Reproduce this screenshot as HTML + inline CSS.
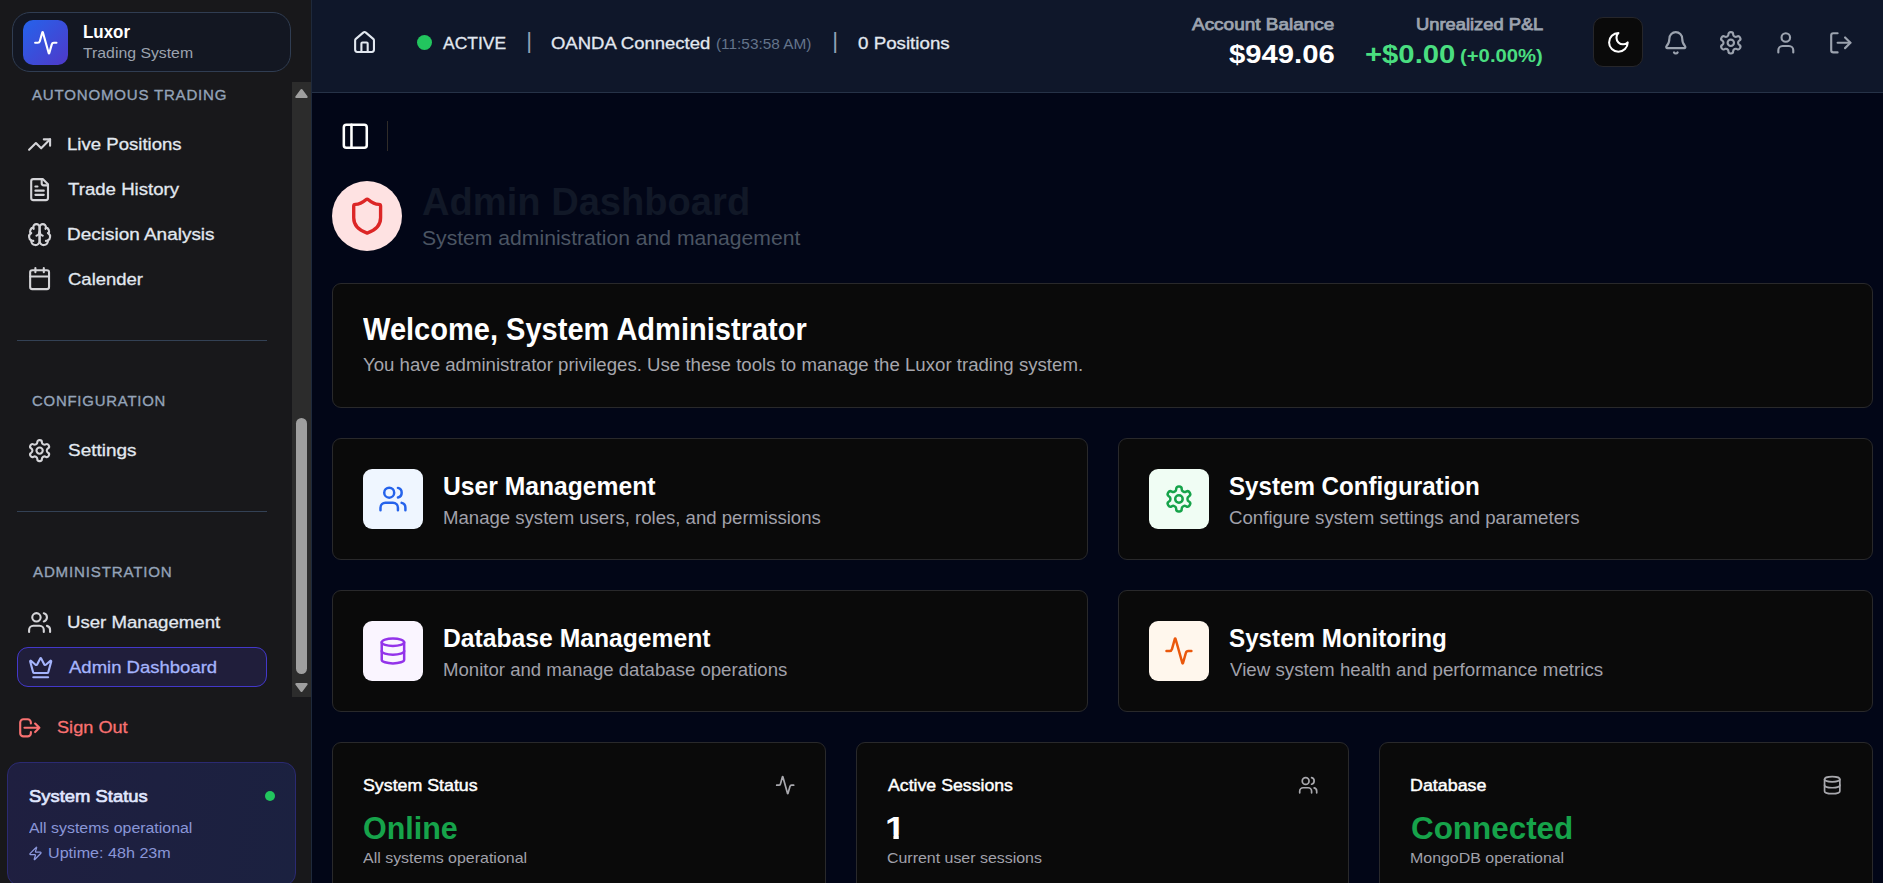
<!DOCTYPE html>
<html lang="en"><head><meta charset="utf-8"><title>Luxor Trading System - Admin Dashboard</title><style>
*{box-sizing:border-box;margin:0;padding:0}
html,body{width:1883px;height:883px;overflow:hidden;background:#020617;font-family:"Liberation Sans",Arial,sans-serif;}
#app{position:relative;width:1883px;height:883px;overflow:hidden;background:#020617}
.abs,.t,.ic{position:absolute}
.t{white-space:nowrap;display:block;transform-origin:0 50%}
.ic{display:block;overflow:visible}
#sb{position:absolute;left:0;top:0;width:312px;height:883px;background:#18181b;border-right:1px solid #1e293b}
#tb{position:absolute;left:312px;top:0;width:1571px;height:93px;background:#0f172a;border-bottom:1px solid #263247}
.card{position:absolute;background:#0a0a0a;border:1px solid #29292b;border-radius:9px}
.ib{position:absolute;width:60px;height:60px;border-radius:9px}
.sep{position:absolute;left:17px;width:250px;height:1px;background:#334155}
</style></head><body><div id="app">
<aside id="sb">
  <div class="abs" style="left:12px;top:12px;width:279px;height:60px;border-radius:18px;background:#131722;border:1px solid #303d52"></div>
  <div class="abs" style="left:23px;top:20px;width:45px;height:45px;border-radius:10px;background:linear-gradient(135deg,#2563eb,#4f39c9)"></div>
  <svg class="ic" style="left:32.70px;top:29.70px;width:25.60px;height:25.60px;color:#ffffff;" viewBox="0 0 24 24" fill="none" stroke="currentColor" stroke-width="2" stroke-linecap="round" stroke-linejoin="round"><path d="M22 12h-2.48a2 2 0 0 0-1.93 1.46l-2.35 8.36a.25.25 0 0 1-.48 0L9.24 2.18a.25.25 0 0 0-.48 0l-2.35 8.36A2 2 0 0 1 4.49 12H2"/></svg>
  <span class="t" id="lux" style="left:83.06px;top:18.50px;font-size:18.4px;line-height:26px;font-weight:700;color:#ffffff;transform:scaleX(0.9199);">Luxor</span><span class="t" id="luxs" style="left:83.38px;top:41.90px;font-size:15px;line-height:21px;font-weight:400;color:#9ca3af;transform:scaleX(1.0535);">Trading System</span><span class="t" id="l1" style="left:32.11px;top:83.70px;font-size:15px;line-height:21px;font-weight:400;color:#94a3b8;transform:scaleX(1.0029);-webkit-text-stroke:0.35px #94a3b8;letter-spacing:0.8px;">AUTONOMOUS TRADING</span>
  <svg class="ic" style="left:27.00px;top:132.00px;width:25.20px;height:25.20px;color:#d4d4d8;" viewBox="0 0 24 24" fill="none" stroke="currentColor" stroke-width="2" stroke-linecap="round" stroke-linejoin="round"><polyline points="22 7 13.5 15.5 8.5 10.5 2 17"/><polyline points="16 7 22 7 22 13"/></svg><span class="t" id="n1" style="left:67.23px;top:132.10px;font-size:17.2px;line-height:24px;font-weight:400;color:#e2e8f0;transform:scaleX(1.0813);-webkit-text-stroke:0.3px #e2e8f0;">Live Positions</span>
  <svg class="ic" style="left:27.00px;top:176.80px;width:25.20px;height:25.20px;color:#d4d4d8;" viewBox="0 0 24 24" fill="none" stroke="currentColor" stroke-width="2" stroke-linecap="round" stroke-linejoin="round"><path d="M15 2H6a2 2 0 0 0-2 2v16a2 2 0 0 0 2 2h12a2 2 0 0 0 2-2V7Z"/><path d="M14 2v4a2 2 0 0 0 2 2h4"/><path d="M10 9H8"/><path d="M16 13H8"/><path d="M16 17H8"/></svg><span class="t" id="n2" style="left:68.31px;top:177.30px;font-size:17.2px;line-height:24px;font-weight:400;color:#e2e8f0;transform:scaleX(1.0834);-webkit-text-stroke:0.3px #e2e8f0;">Trade History</span>
  <svg class="ic" style="left:27.00px;top:221.60px;width:25.20px;height:25.20px;color:#d4d4d8;" viewBox="0 0 24 24" fill="none" stroke="currentColor" stroke-width="2" stroke-linecap="round" stroke-linejoin="round"><path d="M12 5a3 3 0 1 0-5.997.125 4 4 0 0 0-2.526 5.77 4 4 0 0 0 .556 6.588A4 4 0 1 0 12 18Z"/><path d="M12 5a3 3 0 1 1 5.997.125 4 4 0 0 1 2.526 5.77 4 4 0 0 1-.556 6.588A4 4 0 1 1 12 18Z"/><path d="M15 13a4.5 4.5 0 0 1-3-4 4.5 4.5 0 0 1-3 4"/><path d="M17.599 6.5a3 3 0 0 0 .399-1.375"/><path d="M6.003 5.125A3 3 0 0 0 6.401 6.5"/><path d="M3.477 10.896a4 4 0 0 1 .585-.396"/><path d="M19.938 10.5a4 4 0 0 1 .585.396"/><path d="M6 18a4 4 0 0 1-1.967-.516"/><path d="M19.967 17.484A4 4 0 0 1 18 18"/></svg><span class="t" id="n3" style="left:67.21px;top:222.10px;font-size:17.2px;line-height:24px;font-weight:400;color:#e2e8f0;transform:scaleX(1.1034);-webkit-text-stroke:0.3px #e2e8f0;">Decision Analysis</span>
  <svg class="ic" style="left:27.00px;top:266.40px;width:25.20px;height:25.20px;color:#d4d4d8;" viewBox="0 0 24 24" fill="none" stroke="currentColor" stroke-width="2" stroke-linecap="round" stroke-linejoin="round"><path d="M8 2v4"/><path d="M16 2v4"/><rect width="18" height="18" x="3" y="4" rx="2"/><path d="M3 10h18"/></svg><span class="t" id="n4" style="left:67.56px;top:267.00px;font-size:17.2px;line-height:24px;font-weight:400;color:#e2e8f0;transform:scaleX(1.0755);-webkit-text-stroke:0.3px #e2e8f0;">Calender</span>
  <div class="sep" style="top:340px"></div>
  <span class="t" id="l2" style="left:31.81px;top:389.70px;font-size:15px;line-height:21px;font-weight:400;color:#94a3b8;transform:scaleX(0.9927);-webkit-text-stroke:0.35px #94a3b8;letter-spacing:0.8px;">CONFIGURATION</span>
  <svg class="ic" style="left:27.00px;top:437.90px;width:25.20px;height:25.20px;color:#d4d4d8;" viewBox="0 0 24 24" fill="none" stroke="currentColor" stroke-width="2" stroke-linecap="round" stroke-linejoin="round"><path d="M12.22 2h-.44a2 2 0 0 0-2 2v.18a2 2 0 0 1-1 1.73l-.43.25a2 2 0 0 1-2 0l-.15-.08a2 2 0 0 0-2.73.73l-.22.38a2 2 0 0 0 .73 2.73l.15.1a2 2 0 0 1 1 1.72v.51a2 2 0 0 1-1 1.74l-.15.09a2 2 0 0 0-.73 2.73l.22.38a2 2 0 0 0 2.73.73l.15-.08a2 2 0 0 1 2 0l.43.25a2 2 0 0 1 1 1.73V20a2 2 0 0 0 2 2h.44a2 2 0 0 0 2-2v-.18a2 2 0 0 1 1-1.73l.43-.25a2 2 0 0 1 2 0l.15.08a2 2 0 0 0 2.73-.73l.22-.39a2 2 0 0 0-.73-2.73l-.15-.08a2 2 0 0 1-1-1.74v-.5a2 2 0 0 1 1-1.74l.15-.09a2 2 0 0 0 .73-2.73l-.22-.38a2 2 0 0 0-2.73-.73l-.15.08a2 2 0 0 1-2 0l-.43-.25a2 2 0 0 1-1-1.73V4a2 2 0 0 0-2-2z"/><circle cx="12" cy="12" r="3"/></svg><span class="t" id="n5" style="left:67.56px;top:438.10px;font-size:17.2px;line-height:24px;font-weight:400;color:#e2e8f0;transform:scaleX(1.1016);-webkit-text-stroke:0.3px #e2e8f0;">Settings</span>
  <div class="sep" style="top:511px"></div>
  <span class="t" id="l3" style="left:32.51px;top:560.70px;font-size:15px;line-height:21px;font-weight:400;color:#94a3b8;transform:scaleX(1.0083);-webkit-text-stroke:0.35px #94a3b8;letter-spacing:0.8px;">ADMINISTRATION</span>
  <svg class="ic" style="left:27.00px;top:609.90px;width:25.20px;height:25.20px;color:#d4d4d8;" viewBox="0 0 24 24" fill="none" stroke="currentColor" stroke-width="2" stroke-linecap="round" stroke-linejoin="round"><path d="M16 21v-2a4 4 0 0 0-4-4H6a4 4 0 0 0-4 4v2"/><circle cx="9" cy="7" r="4"/><path d="M22 21v-2a4 4 0 0 0-3-3.87"/><path d="M16 3.13a4 4 0 0 1 0 7.75"/></svg><span class="t" id="n6" style="left:67.27px;top:610.10px;font-size:17.2px;line-height:24px;font-weight:400;color:#e2e8f0;transform:scaleX(1.0833);-webkit-text-stroke:0.3px #e2e8f0;">User Management</span>
  <div class="abs" style="left:17px;top:647px;width:250px;height:40px;border-radius:11px;background:#201e3b;border:1px solid #4338ca"></div>
  <svg class="ic" style="left:27.60px;top:654.50px;width:25.40px;height:25.40px;color:#a5b4fc;" viewBox="0 0 24 24" fill="none" stroke="currentColor" stroke-width="2" stroke-linecap="round" stroke-linejoin="round"><path d="M11.562 3.266a.5.5 0 0 1 .876 0L15.39 8.87a1 1 0 0 0 1.516.294L21.183 5.5a.5.5 0 0 1 .798.519l-2.834 10.246a1 1 0 0 1-.956.734H5.81a1 1 0 0 1-.957-.734L2.02 6.02a.5.5 0 0 1 .798-.519l4.276 3.664a1 1 0 0 0 1.516-.294z"/><path d="M5 21h14"/></svg><span class="t" id="n7" style="left:69.30px;top:655.00px;font-size:17.2px;line-height:24px;font-weight:400;color:#a5b4fc;transform:scaleX(1.0770);-webkit-text-stroke:0.3px #a5b4fc;">Admin Dashboard</span>
  <div class="abs" style="left:292px;top:82px;width:19px;height:615px;background:#2c2c2c"></div>
  <div class="abs" style="left:296px;top:418px;width:11px;height:256px;border-radius:6px;background:#9f9f9f"></div>
  <svg class="ic" style="left:294.2px;top:86.7px;width:15px;height:13px" viewBox="0 0 15 13"><path d="M7.5 3.3 L12.5 9.9 L2.5 9.9 Z" fill="#9f9f9f" stroke="#9f9f9f" stroke-width="2.4" stroke-linejoin="round"/></svg>
  <svg class="ic" style="left:294.2px;top:680.8px;width:15px;height:13px" viewBox="0 0 15 13"><path d="M7.5 9.7 L12.5 3.1 L2.5 3.1 Z" fill="#9f9f9f" stroke="#9f9f9f" stroke-width="2.4" stroke-linejoin="round"/></svg>
  <svg class="ic" style="left:16.80px;top:714.60px;width:25.60px;height:25.60px;color:#f87171;" viewBox="0 0 24 24" fill="none" stroke="currentColor" stroke-width="2" stroke-linecap="round" stroke-linejoin="round"><path d="M17 16l4-4m0 0l-4-4m4 4H7m6 4v1a3 3 0 01-3 3H6a3 3 0 01-3-3V7a3 3 0 013-3h4a3 3 0 013 3v1"/></svg><span class="t" id="so" style="left:57.49px;top:715.10px;font-size:17.2px;line-height:24px;font-weight:400;color:#f87171;transform:scaleX(1.0563);-webkit-text-stroke:0.3px #f87171;">Sign Out</span>
  <div class="abs" style="left:7px;top:762px;width:289px;height:124px;border-radius:13px;background:linear-gradient(100deg,#1f1f40,#1b2140);border:1px solid #2b2a72"></div>
  <span class="t" id="ss" style="left:28.75px;top:783.80px;font-size:17.4px;line-height:24px;font-weight:400;color:#e0e7ff;transform:scaleX(1.0589);-webkit-text-stroke:0.65px #e0e7ff;">System Status</span>
  <div class="abs" style="left:264.8px;top:790.9px;width:10.6px;height:10.6px;border-radius:50%;background:#22c55e"></div>
  <span class="t" id="ss1" style="left:29.30px;top:817.10px;font-size:15.2px;line-height:21px;font-weight:400;color:#a5b4fc;transform:scaleX(1.0459);opacity:.8;">All systems operational</span>
  <svg class="ic" style="left:27.95px;top:845.95px;width:14.90px;height:14.90px;color:#8f9be0;" viewBox="0 0 24 24" fill="none" stroke="currentColor" stroke-width="2" stroke-linecap="round" stroke-linejoin="round"><path d="M4 14a1 1 0 0 1-.78-1.63l9.9-10.2a.5.5 0 0 1 .86.46l-1.92 6.02A1 1 0 0 0 13 10h7a1 1 0 0 1 .78 1.63l-9.9 10.2a.5.5 0 0 1-.86-.46l1.92-6.02A1 1 0 0 0 11 14z"/></svg><span class="t" id="ss2" style="left:48.17px;top:842.20px;font-size:15.2px;line-height:21px;font-weight:400;color:#a5b4fc;transform:scaleX(1.0614);opacity:.8;">Uptime: 48h 23m</span>
</aside>
<header><div id="tb"></div>
  <svg class="ic" style="left:352.05px;top:30.25px;width:25.10px;height:25.10px;color:#e2e8f0;" viewBox="0 0 24 24" fill="none" stroke="currentColor" stroke-width="2" stroke-linecap="round" stroke-linejoin="round"><path d="M15 21v-8a1 1 0 0 0-1-1h-4a1 1 0 0 0-1 1v8"/><path d="M3 10a2 2 0 0 1 .709-1.528l7-5.999a2 2 0 0 1 2.582 0l7 5.999A2 2 0 0 1 21 10v9a2 2 0 0 1-2 2H5a2 2 0 0 1-2-2z"/></svg>
  <div class="abs" style="left:416.6px;top:34.8px;width:15.4px;height:15.4px;border-radius:50%;background:#22c55e"></div>
  <span class="t" id="act" style="left:443.09px;top:30.80px;font-size:17.2px;line-height:24px;font-weight:400;color:#e2e8f0;transform:scaleX(1.0161);-webkit-text-stroke:0.3px #e2e8f0;">ACTIVE</span><span class="t" id="p1" style="left:526.30px;top:25.30px;font-size:22.5px;line-height:31px;font-weight:400;color:#94a3b8;">|</span><span class="t" id="oan" style="left:551.11px;top:30.80px;font-size:17.2px;line-height:24px;font-weight:400;color:#e2e8f0;transform:scaleX(1.0752);-webkit-text-stroke:0.3px #e2e8f0;">OANDA Connected</span><span class="t" id="tm" style="left:716.10px;top:33.40px;font-size:15.1px;line-height:21px;font-weight:400;color:#64748b;transform:scaleX(1.0182);">(11:53:58 AM)</span><span class="t" id="p2" style="left:832.30px;top:25.30px;font-size:22.5px;line-height:31px;font-weight:400;color:#94a3b8;">|</span><span class="t" id="pos" style="left:858.43px;top:30.80px;font-size:17.2px;line-height:24px;font-weight:400;color:#e2e8f0;transform:scaleX(1.0908);-webkit-text-stroke:0.3px #e2e8f0;">0 Positions</span><span class="t" id="ab" style="left:1191.61px;top:14.10px;font-size:15.9px;line-height:22px;font-weight:400;color:#9ca3af;transform:scaleX(1.1927);-webkit-text-stroke:0.75px #9ca3af;">Account Balance</span><span class="t" id="abv" style="left:1228.85px;top:35.50px;font-size:25.6px;line-height:36px;font-weight:700;color:#ffffff;transform:scaleX(1.1437);">$949.06</span><span class="t" id="up" style="left:1415.84px;top:14.10px;font-size:15.9px;line-height:22px;font-weight:400;color:#9ca3af;transform:scaleX(1.1530);-webkit-text-stroke:0.75px #9ca3af;">Unrealized P&amp;L</span><span class="t" id="upv" style="left:1364.74px;top:35.50px;font-size:25.6px;line-height:36px;font-weight:700;color:#4ade80;transform:scaleX(1.1432);">+$0.00</span><span class="t" id="upp" style="left:1460.06px;top:42.00px;font-size:19px;line-height:27px;font-weight:700;color:#4ade80;transform:scaleX(1.0675);">(+0.00%)</span>
  <div class="abs" style="left:1593.2px;top:17px;width:49.6px;height:49.6px;border-radius:10px;background:#0a0a0a;border:1px solid #26262a"></div>
  <svg class="ic" style="left:1605.60px;top:29.60px;width:24.80px;height:24.80px;color:#ffffff;" viewBox="0 0 24 24" fill="none" stroke="currentColor" stroke-width="2" stroke-linecap="round" stroke-linejoin="round"><path d="M12 3a6 6 0 0 0 9 9 9 9 0 1 1-9-9Z"/></svg>
  <svg class="ic" style="left:1662.80px;top:29.70px;width:25.60px;height:25.60px;color:#9ca3af;" viewBox="0 0 24 24" fill="none" stroke="currentColor" stroke-width="2" stroke-linecap="round" stroke-linejoin="round"><path d="M10.268 21a2 2 0 0 0 3.464 0"/><path d="M3.262 15.326A1 1 0 0 0 4 17h16a1 1 0 0 0 .74-1.673C19.41 13.956 18 12.499 18 8A6 6 0 0 0 6 8c0 4.499-1.411 5.956-2.738 7.326"/></svg>
  <svg class="ic" style="left:1717.60px;top:29.70px;width:25.60px;height:25.60px;color:#9ca3af;" viewBox="0 0 24 24" fill="none" stroke="currentColor" stroke-width="2" stroke-linecap="round" stroke-linejoin="round"><path d="M12.22 2h-.44a2 2 0 0 0-2 2v.18a2 2 0 0 1-1 1.73l-.43.25a2 2 0 0 1-2 0l-.15-.08a2 2 0 0 0-2.73.73l-.22.38a2 2 0 0 0 .73 2.73l.15.1a2 2 0 0 1 1 1.72v.51a2 2 0 0 1-1 1.74l-.15.09a2 2 0 0 0-.73 2.73l.22.38a2 2 0 0 0 2.73.73l.15-.08a2 2 0 0 1 2 0l.43.25a2 2 0 0 1 1 1.73V20a2 2 0 0 0 2 2h.44a2 2 0 0 0 2-2v-.18a2 2 0 0 1 1-1.73l.43-.25a2 2 0 0 1 2 0l.15.08a2 2 0 0 0 2.73-.73l.22-.39a2 2 0 0 0-.73-2.73l-.15-.08a2 2 0 0 1-1-1.74v-.5a2 2 0 0 1 1-1.74l.15-.09a2 2 0 0 0 .73-2.73l-.22-.38a2 2 0 0 0-2.73-.73l-.15.08a2 2 0 0 1-2 0l-.43-.25a2 2 0 0 1-1-1.73V4a2 2 0 0 0-2-2z"/><circle cx="12" cy="12" r="3"/></svg>
  <svg class="ic" style="left:1772.80px;top:29.70px;width:25.60px;height:25.60px;color:#9ca3af;" viewBox="0 0 24 24" fill="none" stroke="currentColor" stroke-width="2" stroke-linecap="round" stroke-linejoin="round"><path d="M19 21v-2a4 4 0 0 0-4-4H9a4 4 0 0 0-4 4v2"/><circle cx="12" cy="7" r="4"/></svg>
  <svg class="ic" style="left:1827.80px;top:29.70px;width:25.60px;height:25.60px;color:#9ca3af;" viewBox="0 0 24 24" fill="none" stroke="currentColor" stroke-width="2" stroke-linecap="round" stroke-linejoin="round"><path d="M9 21H5a2 2 0 0 1-2-2V5a2 2 0 0 1 2-2h4"/><polyline points="16 17 21 12 16 7"/><line x1="21" x2="9" y1="12" y2="12"/></svg>
</header>
<main>
  <svg class="ic" style="left:339.85px;top:120.75px;width:30.60px;height:30.60px;color:#ffffff;" viewBox="0 0 24 24" fill="none" stroke="currentColor" stroke-width="2" stroke-linecap="round" stroke-linejoin="round"><rect width="18" height="18" x="3" y="3" rx="2"/><path d="M9 3v18"/></svg>
  <div class="abs" style="left:387px;top:121px;width:1px;height:30px;background:#302c29"></div>
  <div class="abs" style="left:331.9px;top:180.8px;width:70.4px;height:70.4px;border-radius:50%;background:#fee2e2"></div>
  <svg class="ic" style="left:347.00px;top:195.65px;width:40.30px;height:40.30px;color:#dc2626;" viewBox="0 0 24 24" fill="none" stroke="currentColor" stroke-width="2" stroke-linecap="round" stroke-linejoin="round"><path d="M20 13c0 5-3.5 7.5-7.66 8.95a1 1 0 0 1-.67-.01C7.5 20.5 4 18 4 13V6a1 1 0 0 1 1-1c2 0 4.5-1.2 6.24-2.72a1.17 1.17 0 0 1 1.52 0C14.51 3.81 17 5 19 5a1 1 0 0 1 1 1z"/></svg>
  <span class="t" id="h1" style="left:421.94px;top:174.50px;font-size:38.4px;line-height:54px;font-weight:700;color:#111827;transform:scaleX(0.9926);">Admin Dashboard</span><span class="t" id="h1s" style="left:422.26px;top:223.80px;font-size:19.7px;line-height:28px;font-weight:400;color:#4b5563;transform:scaleX(1.0737);">System administration and management</span>
  <div class="card" style="left:332px;top:283px;width:1541px;height:124.5px"></div>
  <span class="t" id="wc" style="left:363.32px;top:308.00px;font-size:30.5px;line-height:43px;font-weight:700;color:#ffffff;transform:scaleX(0.9521);">Welcome, System Administrator</span><span class="t" id="wcs" style="left:362.79px;top:352.90px;font-size:17.5px;line-height:24px;font-weight:400;color:#a6a6ad;transform:scaleX(1.0646);">You have administrator privileges. Use these tools to manage the Luxor trading system.</span>
  <div class="card" style="left:332px;top:438px;width:756px;height:122px"></div><div class="ib" style="left:363.1px;top:468.8px;background:#eff6ff"></div><svg class="ic" style="left:378.05px;top:483.85px;width:29.90px;height:29.90px;color:#2563eb;" viewBox="0 0 24 24" fill="none" stroke="currentColor" stroke-width="2" stroke-linecap="round" stroke-linejoin="round"><path d="M16 21v-2a4 4 0 0 0-4-4H6a4 4 0 0 0-4 4v2"/><circle cx="9" cy="7" r="4"/><path d="M22 21v-2a4 4 0 0 0-3-3.87"/><path d="M16 3.13a4 4 0 0 1 0 7.75"/></svg><span class="t" id="c1" style="left:442.69px;top:467.50px;font-size:25.4px;line-height:36px;font-weight:700;color:#ffffff;transform:scaleX(0.9713);">User Management</span><span class="t" id="c1s" style="left:442.65px;top:505.50px;font-size:17.5px;line-height:24px;font-weight:400;color:#a1a1aa;transform:scaleX(1.0613);">Manage system users, roles, and permissions</span>
  <div class="card" style="left:1118px;top:438px;width:755px;height:122px"></div><div class="ib" style="left:1149.1px;top:468.8px;background:#f0fdf4"></div><svg class="ic" style="left:1164.05px;top:483.85px;width:29.90px;height:29.90px;color:#16a34a;" viewBox="0 0 24 24" fill="none" stroke="currentColor" stroke-width="2" stroke-linecap="round" stroke-linejoin="round"><path d="M12.22 2h-.44a2 2 0 0 0-2 2v.18a2 2 0 0 1-1 1.73l-.43.25a2 2 0 0 1-2 0l-.15-.08a2 2 0 0 0-2.73.73l-.22.38a2 2 0 0 0 .73 2.73l.15.1a2 2 0 0 1 1 1.72v.51a2 2 0 0 1-1 1.74l-.15.09a2 2 0 0 0-.73 2.73l.22.38a2 2 0 0 0 2.73.73l.15-.08a2 2 0 0 1 2 0l.43.25a2 2 0 0 1 1 1.73V20a2 2 0 0 0 2 2h.44a2 2 0 0 0 2-2v-.18a2 2 0 0 1 1-1.73l.43-.25a2 2 0 0 1 2 0l.15.08a2 2 0 0 0 2.73-.73l.22-.39a2 2 0 0 0-.73-2.73l-.15-.08a2 2 0 0 1-1-1.74v-.5a2 2 0 0 1 1-1.74l.15-.09a2 2 0 0 0 .73-2.73l-.22-.38a2 2 0 0 0-2.73-.73l-.15.08a2 2 0 0 1-2 0l-.43-.25a2 2 0 0 1-1-1.73V4a2 2 0 0 0-2-2z"/><circle cx="12" cy="12" r="3"/></svg><span class="t" id="c2" style="left:1228.91px;top:467.50px;font-size:25.4px;line-height:36px;font-weight:700;color:#ffffff;transform:scaleX(0.9510);">System Configuration</span><span class="t" id="c2s" style="left:1228.82px;top:505.50px;font-size:17.5px;line-height:24px;font-weight:400;color:#a1a1aa;transform:scaleX(1.0664);">Configure system settings and parameters</span>
  <div class="card" style="left:332px;top:590px;width:756px;height:122px"></div><div class="ib" style="left:363.1px;top:620.8px;background:#faf5ff"></div><svg class="ic" style="left:378.05px;top:635.85px;width:29.90px;height:29.90px;color:#9333ea;" viewBox="0 0 24 24" fill="none" stroke="currentColor" stroke-width="2" stroke-linecap="round" stroke-linejoin="round"><ellipse cx="12" cy="5" rx="9" ry="3"/><path d="M3 5V19A9 3 0 0 0 21 19V5"/><path d="M3 12A9 3 0 0 0 21 12"/></svg><span class="t" id="c3" style="left:442.56px;top:619.50px;font-size:25.4px;line-height:36px;font-weight:700;color:#ffffff;transform:scaleX(0.9724);">Database Management</span><span class="t" id="c3s" style="left:442.65px;top:657.50px;font-size:17.5px;line-height:24px;font-weight:400;color:#a1a1aa;transform:scaleX(1.0627);">Monitor and manage database operations</span>
  <div class="card" style="left:1118px;top:590px;width:755px;height:122px"></div><div class="ib" style="left:1149.1px;top:620.8px;background:#fff7ed"></div><svg class="ic" style="left:1164.05px;top:635.85px;width:29.90px;height:29.90px;color:#ea580c;" viewBox="0 0 24 24" fill="none" stroke="currentColor" stroke-width="2" stroke-linecap="round" stroke-linejoin="round"><path d="M22 12h-2.48a2 2 0 0 0-1.93 1.46l-2.35 8.36a.25.25 0 0 1-.48 0L9.24 2.18a.25.25 0 0 0-.48 0l-2.35 8.36A2 2 0 0 1 4.49 12H2"/></svg><span class="t" id="c4" style="left:1228.91px;top:619.50px;font-size:25.4px;line-height:36px;font-weight:700;color:#ffffff;transform:scaleX(0.9533);">System Monitoring</span><span class="t" id="c4s" style="left:1229.70px;top:657.50px;font-size:17.5px;line-height:24px;font-weight:400;color:#a1a1aa;transform:scaleX(1.0696);">View system health and performance metrics</span>
  <div class="card" style="left:332px;top:742px;width:494px;height:170px"></div><svg class="ic" style="left:774.80px;top:774.80px;width:20.40px;height:20.40px;color:#a8a8ad;" viewBox="0 0 24 24" fill="none" stroke="currentColor" stroke-width="2" stroke-linecap="round" stroke-linejoin="round"><path d="M22 12h-2.48a2 2 0 0 0-1.93 1.46l-2.35 8.36a.25.25 0 0 1-.48 0L9.24 2.18a.25.25 0 0 0-.48 0l-2.35 8.36A2 2 0 0 1 4.49 12H2"/></svg><span class="t" id="s1" style="left:363.17px;top:773.90px;font-size:17px;line-height:24px;font-weight:400;color:#ffffff;transform:scaleX(1.0460);-webkit-text-stroke:0.45px #ffffff;">System Status</span><span class="t" id="s1v" style="left:363.35px;top:807.00px;font-size:30.7px;line-height:43px;font-weight:700;color:#16a34a;transform:scaleX(0.9924);">Online</span><span class="t" id="s1s" style="left:363.30px;top:846.80px;font-size:15px;line-height:21px;font-weight:400;color:#a1a1aa;transform:scaleX(1.0637);">All systems operational</span>
  <div class="card" style="left:856px;top:742px;width:493px;height:170px"></div><svg class="ic" style="left:1297.80px;top:774.80px;width:20.40px;height:20.40px;color:#a8a8ad;" viewBox="0 0 24 24" fill="none" stroke="currentColor" stroke-width="2" stroke-linecap="round" stroke-linejoin="round"><path d="M16 21v-2a4 4 0 0 0-4-4H6a4 4 0 0 0-4 4v2"/><circle cx="9" cy="7" r="4"/><path d="M22 21v-2a4 4 0 0 0-3-3.87"/><path d="M16 3.13a4 4 0 0 1 0 7.75"/></svg><span class="t" id="s2" style="left:888.06px;top:773.90px;font-size:17px;line-height:24px;font-weight:400;color:#ffffff;transform:scaleX(1.0415);-webkit-text-stroke:0.45px #ffffff;">Active Sessions</span><span class="t" id="s2v" style="left:885.30px;top:806.90px;font-size:30.7px;line-height:43px;font-weight:700;color:#ffffff;transform:scaleX(1.2000);clip-path:polygon(0 0,100% 0,100% 27.8px,11.5px 27.8px,11.5px 100%,7px 100%,7px 27.8px,0 27.8px);">1</span><span class="t" id="s2s" style="left:886.60px;top:846.80px;font-size:15px;line-height:21px;font-weight:400;color:#a1a1aa;transform:scaleX(1.0617);">Current user sessions</span>
  <div class="card" style="left:1379px;top:742px;width:494px;height:170px"></div><svg class="ic" style="left:1821.80px;top:774.80px;width:20.40px;height:20.40px;color:#a8a8ad;" viewBox="0 0 24 24" fill="none" stroke="currentColor" stroke-width="2" stroke-linecap="round" stroke-linejoin="round"><ellipse cx="12" cy="5" rx="9" ry="3"/><path d="M3 5V19A9 3 0 0 0 21 19V5"/><path d="M3 12A9 3 0 0 0 21 12"/></svg><span class="t" id="s3" style="left:1410.41px;top:773.90px;font-size:17px;line-height:24px;font-weight:400;color:#ffffff;transform:scaleX(1.0505);-webkit-text-stroke:0.45px #ffffff;">Database</span><span class="t" id="s3v" style="left:1410.90px;top:807.00px;font-size:30.7px;line-height:43px;font-weight:700;color:#16a34a;transform:scaleX(1.0233);">Connected</span><span class="t" id="s3s" style="left:1409.83px;top:846.80px;font-size:15px;line-height:21px;font-weight:400;color:#a1a1aa;transform:scaleX(1.0624);">MongoDB operational</span>
</main>
</div></body></html>
